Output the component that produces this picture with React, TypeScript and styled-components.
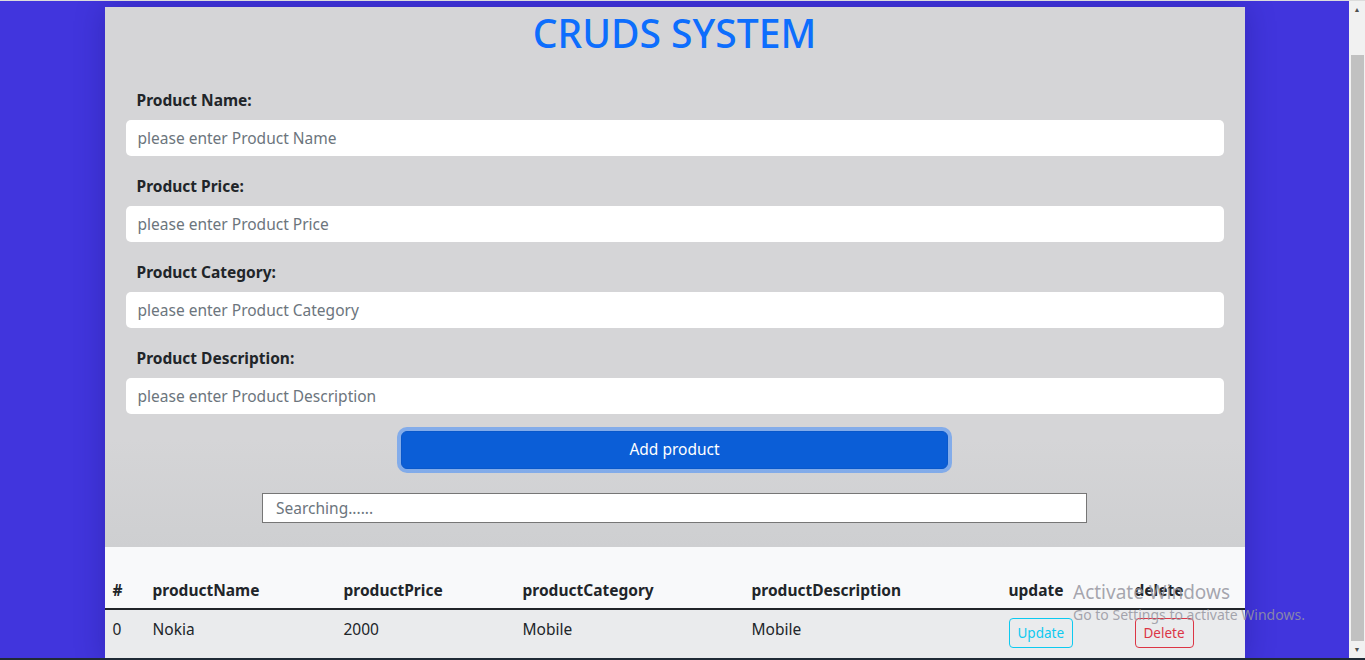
import { useState } from "react";
import styled, { createGlobalStyle } from "styled-components";

interface Product {
  name: string;
  price: string;
  category: string;
  description: string;
}

const GlobalStyle = createGlobalStyle`
  html, body {
    margin: 0;
    padding: 0;
    height: 660px;
    overflow: hidden;
  }
  body {
    font-family: "Noto Sans", "Open Sans", sans-serif;
    font-size: 16px;
    line-height: 1.5;
    color: #212529;
  }
  * { box-sizing: border-box; }
`;

const fields = [
  { key: "name", label: "Product Name:", placeholder: "please enter Product Name" },
  { key: "price", label: "Product Price:", placeholder: "please enter Product Price" },
  { key: "category", label: "Product Category:", placeholder: "please enter Product Category" },
  { key: "description", label: "Product Description:", placeholder: "please enter Product Description" },
] as const;

const columns = [
  { title: "#", width: 40 },
  { title: "productName", width: 191 },
  { title: "productPrice", width: 179 },
  { title: "productCategory", width: 229 },
  { title: "productDescription", width: 257 },
  { title: "update", width: 126 },
  { title: "delete", width: 118 },
];

export default function App() {
  const [form, setForm] = useState({ name: "", price: "", category: "", description: "" });
  const [search, setSearch] = useState("");
  const [products] = useState<Product[]>([
    { name: "Nokia", price: "2000", category: "Mobile", description: "Mobile" },
  ]);

  const shown = products.filter((p) =>
    p.name.toLowerCase().includes(search.trim().toLowerCase())
  );

  return (
    <>
      <GlobalStyle />
      <Screen>
        <TopLine />
        <Body>
          <Page>
            <Container>
              <FormPanel>
                <Title>CRUDS SYSTEM</Title>
                {fields.map((f) => (
                  <Field key={f.key}>
                    <Label htmlFor={`f-${f.key}`}>{f.label}</Label>
                    <Input
                      id={`f-${f.key}`}
                      value={form[f.key]}
                      placeholder={f.placeholder}
                      onChange={(e) => setForm({ ...form, [f.key]: e.currentTarget.value })}
                    />
                  </Field>
                ))}
                <AddButton type="button">Add product</AddButton>
                <SearchInput
                  value={search}
                  placeholder="Searching......"
                  onChange={(e) => setSearch(e.currentTarget.value)}
                />
              </FormPanel>

              <TableArea>
                <Table>
                  <colgroup>
                    {columns.map((c) => (
                      <col key={c.title} style={{ width: c.width }} />
                    ))}
                  </colgroup>
                  <thead>
                    <tr>
                      {columns.map((c) => (
                        <Th key={c.title}>{c.title}</Th>
                      ))}
                    </tr>
                  </thead>
                  <tbody>
                    {shown.map((p, i) => (
                      <Row key={i}>
                        <Td>{i}</Td>
                        <Td>{p.name}</Td>
                        <Td>{p.price}</Td>
                        <Td>{p.category}</Td>
                        <Td>{p.description}</Td>
                        <Td>
                          <OutlineBtn $tone="#0dcaf0">Update</OutlineBtn>
                        </Td>
                        <Td>
                          <OutlineBtn $tone="#dc3545">Delete</OutlineBtn>
                        </Td>
                      </Row>
                    ))}
                  </tbody>
                </Table>
              </TableArea>
            </Container>

            <Watermark aria-hidden="true">
              <strong>Activate Windows</strong>
              <span>Go to Settings to activate Windows.</span>
            </Watermark>
          </Page>

          <Scrollbar aria-hidden="true">
            <Arrow>▲</Arrow>
            <Track>
              <Thumb />
            </Track>
            <Arrow>▼</Arrow>
          </Scrollbar>
        </Body>
        <Taskbar />
      </Screen>
    </>
  );
}

const Screen = styled.div`
  height: 660px;
  display: flex;
  flex-direction: column;
  background: #4135dd;
`;

const TopLine = styled.div`
  height: 1px;
  background: #dcdcdc;
`;

const Body = styled.div`
  flex: 1;
  display: flex;
  min-height: 0;
`;

const Page = styled.div`
  flex: 1;
  position: relative;
  padding-top: 6px;
  overflow: hidden;
`;

const Container = styled.div`
  width: 1140px;
  margin: 0 auto;
  box-shadow: 0 0 28px rgba(10, 0, 80, 0.25);
`;

const FormPanel = styled.section`
  background: linear-gradient(#d5d5d7 80%, #cecfd1);
  padding: 2px 21px 24px;
  display: flex;
  flex-direction: column;
  align-items: center;
`;

const Title = styled.h1`
  margin: 0 0 31px;
  font-size: 39px;
  line-height: 48px;
  font-weight: 500;
  color: #0d6efd;
`;

const Field = styled.div`
  width: 100%;
  display: flex;
  flex-direction: column;
  gap: 8px;
  margin-bottom: 18px;
`;

const Label = styled.label`
  padding-left: 11px;
  font-weight: 700;
  font-size: 15.5px;
  line-height: 24px;
  color: #212529;
`;

const Input = styled.input`
  width: 100%;
  height: 36px;
  padding: 0 12px;
  border: none;
  border-radius: 5px;
  background: #fff;
  font: inherit;
  font-size: 15.5px;
  color: #212529;
  outline: none;

  &::placeholder {
    color: #6c757d;
  }
`;

const AddButton = styled.button`
  width: 547px;
  height: 38px;
  margin-top: -1px;
  border: 1px solid #0a58ca;
  border-radius: 6px;
  background: #0b5ed7;
  color: #fff;
  font: inherit;
  font-size: 15.5px;
  box-shadow: 0 0 0 4px rgba(49, 132, 253, 0.5);
  cursor: pointer;
`;

const SearchInput = styled.input`
  width: 825px;
  height: 30px;
  margin-top: 24px;
  padding: 0 13px;
  border: 1px solid #767676;
  border-radius: 0;
  background: #fff;
  font: inherit;
  font-size: 15.5px;
  outline: none;

  &::placeholder {
    color: #6c757d;
  }
`;

const TableArea = styled.section`
  background: #f8f9fa;
  padding-top: 23px;
`;

const Table = styled.table`
  width: 100%;
  border-collapse: collapse;
  table-layout: fixed;
`;

const Th = styled.th`
  text-align: left;
  padding: 8px 8px 6px;
  font-weight: 700;
  font-size: 15.5px;
  line-height: 24px;
  color: #212529;
  border-bottom: 2px solid #212529;
`;

const Row = styled.tr`
  background: #eaebed;
`;

const Td = styled.td`
  padding: 7px 8px 14px;
  font-size: 15.5px;
  line-height: 24px;
  vertical-align: top;
  color: #212529;
`;

const OutlineBtn = styled.button<{ $tone: string }>`
  margin-top: 1px;
  padding: 4px 8px;
  border: 1px solid ${(p) => p.$tone};
  border-radius: 4px;
  background: transparent;
  color: ${(p) => p.$tone};
  font: inherit;
  font-size: 13.5px;
  line-height: 20px;
  cursor: pointer;
`;

const Watermark = styled.div`
  position: absolute;
  left: 1073px;
  top: 578px;
  display: flex;
  flex-direction: column;
  color: rgba(150, 150, 160, 0.85);
  pointer-events: none;

  strong {
    font-weight: 400;
    font-size: 19px;
    line-height: 26px;
  }
  span {
    font-size: 14px;
    line-height: 20px;
  }
`;

const Scrollbar = styled.div`
  width: 16px;
  background: #f1f1f1;
  display: flex;
  flex-direction: column;
  align-items: center;
`;

const Arrow = styled.div`
  height: 17px;
  font-size: 7px;
  line-height: 17px;
  color: #505050;
`;

const Track = styled.div`
  flex: 1;
  width: 100%;
  padding: 37px 1px 0 2px;
  display: flex;
`;

const Thumb = styled.div`
  flex: 1;
  background: #c1c1c1;
`;

const Taskbar = styled.div`
  height: 2px;
  background: #1f2a36;
`;
